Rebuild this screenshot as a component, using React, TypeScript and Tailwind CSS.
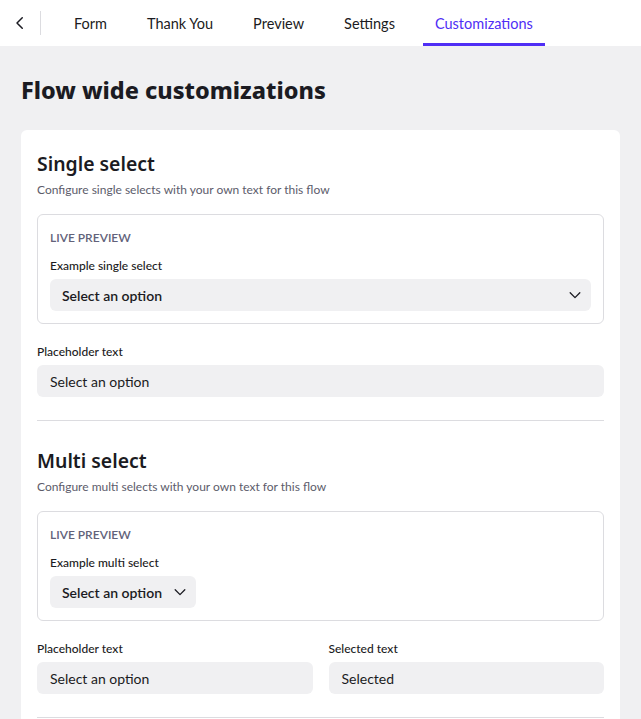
import * as React from 'react';

const font = { fontFamily: 'Lato, "Noto Sans", sans-serif' };
const heading = { fontFamily: '"Noto Sans", Lato, sans-serif' };

const Chevron = ({ className = '' }: { className?: string }) => (
  <svg viewBox="0 0 16 16" className={className} fill="none" stroke="currentColor" strokeWidth={1.5} strokeLinecap="round" strokeLinejoin="round">
    <path d="M2.5 5.5L8 11l5.5-5.5" />
  </svg>
);

const tabs = ['Form', 'Thank You', 'Preview', 'Settings', 'Customizations'];

const TopNav = () => (
  <div className="flex h-[46px] items-stretch bg-white">
    <div className="flex w-[46px] items-center">
      <button className="flex h-full w-[40px] items-center justify-center text-[#1b1b22]">
        <svg viewBox="0 0 24 24" className="h-[18px] w-[18px]" fill="none" stroke="currentColor" strokeWidth={2} strokeLinecap="round" strokeLinejoin="round">
          <path d="M15 5l-7 7 7 7" />
        </svg>
      </button>
      <div className="h-[24px] w-px bg-[#dcdce0]" />
    </div>
    <div className="ml-4 flex gap-4">
      {tabs.map((t) => {
        const active = t === 'Customizations';
        return (
          <div
            key={t}
            className={
              active
                ? 'flex items-center border-b-[3px] border-[#4f2ef5] px-3 pt-[5px] text-[14.5px] text-[#4f2ef5]'
                : 'flex items-center border-b-[3px] border-transparent px-3 pt-[5px] text-[14.5px] text-[#1b1b22]'
            }
          >
            {t}
          </div>
        );
      })}
    </div>
  </div>
);

const Label = ({ children }: { children: React.ReactNode }) => (
  <div className="mb-[5px] text-[12px] font-medium leading-[16px] text-[#1b1b22]">{children}</div>
);

const TextInput = ({ value }: { value: string }) => (
  <div className="flex h-[32px] items-center rounded-md bg-[#f0f0f2] px-[13px] text-[14px] text-[#1b1b22]">{value}</div>
);

const Section = ({
  title,
  desc,
  example,
  full,
  children,
}: {
  title: string;
  desc: string;
  example: string;
  full: boolean;
  children: React.ReactNode;
}) => (
  <div className="flex flex-col">
    <h2 className="text-[19.4px] font-semibold leading-[28px] text-[#1b1b22]" style={heading}>
      {title}
    </h2>
    <p className="mt-[4px] text-[12px] leading-[16px] text-[#5c5c6b]">{desc}</p>
    <div className="mt-[16px] rounded-md border border-[#dcdce0] px-[12px] pb-[12px] pt-[15px]">
      <div className="text-[12px] font-semibold uppercase leading-[16px] text-[#62627a]">Live preview</div>
      <div className="mt-[12px]">
        <Label>{example}</Label>
      </div>
      <div
        className={
          full
            ? 'flex h-[32px] items-center justify-between rounded-md bg-[#f0f0f2] pl-[12px] pr-[9px] text-[14px] font-semibold text-[#1b1b22]'
            : 'flex h-[32px] w-fit items-center gap-[11px] rounded-md bg-[#f0f0f2] pl-[12px] pr-[9px] text-[14px] font-semibold text-[#1b1b22]'
        }
      >
        <span>Select an option</span>
        <Chevron className="h-[14px] w-[14px]" />
      </div>
    </div>
    <div className="mt-[20px]">{children}</div>
    <div className="mt-[23px] h-px bg-[#dcdce0]" />
  </div>
);

export default function App() {
  return (
    <div className="min-h-screen bg-[#f0f0f2]" style={font}>
      <TopNav />
      <div className="px-[21px] pt-[28px]">
        <h1 className="text-[23.4px] font-extrabold leading-[32px] text-[#1b1b22]" style={heading}>
          Flow wide customizations
        </h1>
        <div className="mt-[24px] flex flex-col gap-[26px] rounded-md bg-white px-4 pb-6 pt-[20px]">
          <Section
            title="Single select"
            desc="Configure single selects with your own text for this flow"
            example="Example single select"
            full
          >
            <Label>Placeholder text</Label>
            <TextInput value="Select an option" />
          </Section>
          <Section
            title="Multi select"
            desc="Configure multi selects with your own text for this flow"
            example="Example multi select"
            full={false}
          >
            <div className="grid grid-cols-2 gap-4">
              <div>
                <Label>Placeholder text</Label>
                <TextInput value="Select an option" />
              </div>
              <div>
                <Label>Selected text</Label>
                <TextInput value="Selected" />
              </div>
            </div>
          </Section>
        </div>
      </div>
    </div>
  );
}
